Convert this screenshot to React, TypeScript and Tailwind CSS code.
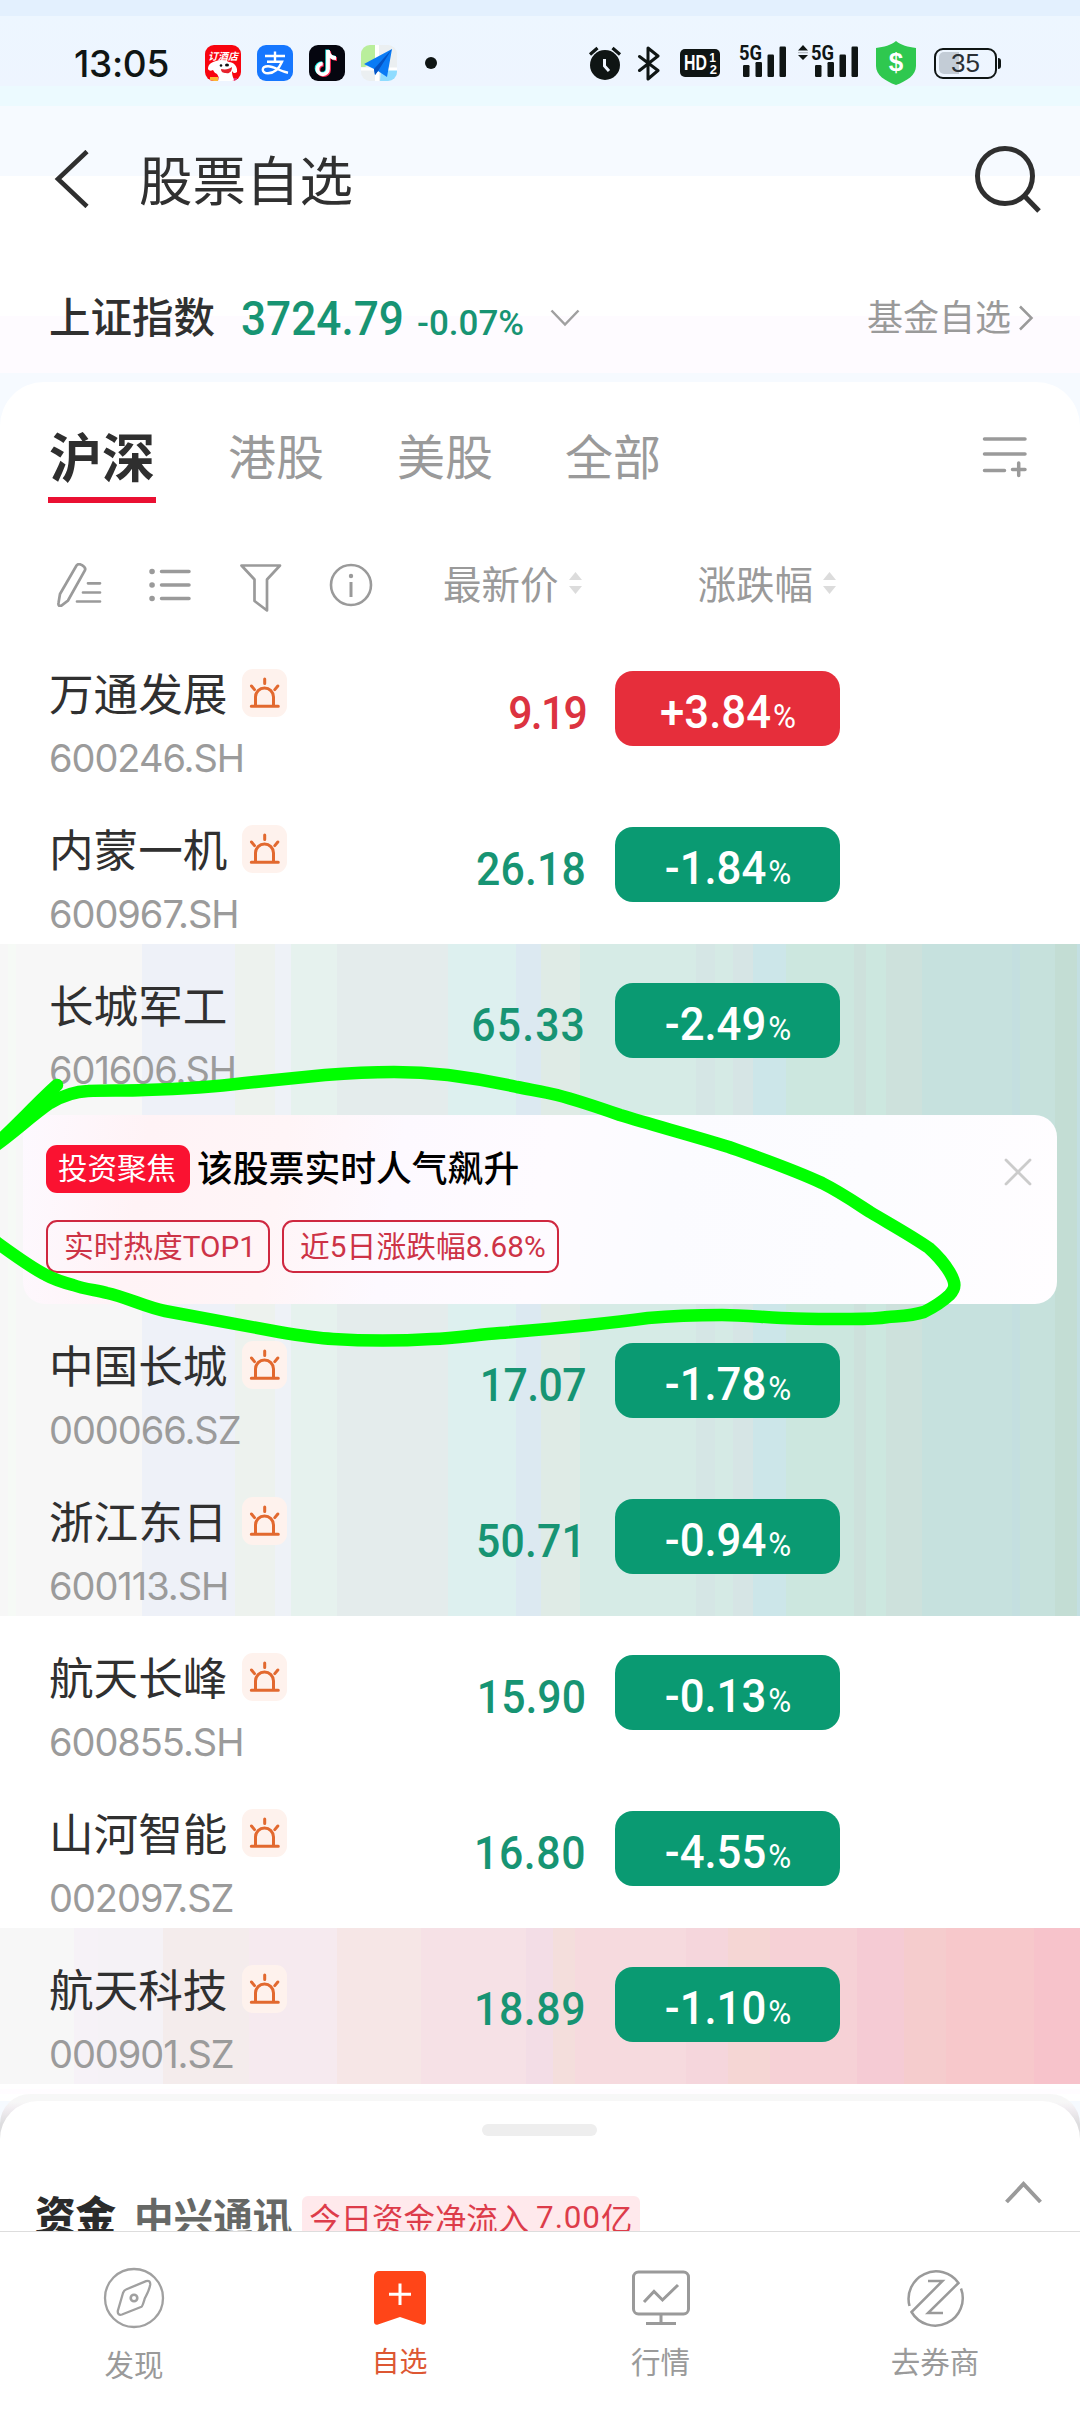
import React from "react";

const CJK = "font-['Noto_Sans_CJK_SC',sans-serif]";
const DIN = "font-['Roboto','Noto_Sans_CJK_SC',sans-serif]";

type Stock = { name: string; code: string; price: string; change: string; tracking: string; alert?: boolean };

const plainTop: Stock[] = [
  { name: "万通发展", code: "600246.SH", price: "9.19", change: "+3.84", tracking: "tracking-[-1.9px]", alert: true },
  { name: "内蒙一机", code: "600967.SH", price: "26.18", change: "-1.84", tracking: "tracking-[0.2px]", alert: true },
];
const focus: Stock = { name: "长城军工", code: "601606.SH", price: "65.33", change: "-2.49", tracking: "tracking-[1.2px]" };
const greenRows: Stock[] = [
  { name: "中国长城", code: "000066.SZ", price: "17.07", change: "-1.78", tracking: "tracking-[-0.6px]", alert: true },
  { name: "浙江东日", code: "600113.SH", price: "50.71", change: "-0.94", tracking: "tracking-[0.2px]", alert: true },
];
const plainBottom: Stock[] = [
  { name: "航天长峰", code: "600855.SH", price: "15.90", change: "-0.13", tracking: "tracking-[0px]", alert: true },
  { name: "山河智能", code: "002097.SZ", price: "16.80", change: "-4.55", tracking: "tracking-[0.6px]", alert: true },
];
const pinkRow: Stock = { name: "航天科技", code: "000901.SZ", price: "18.89", change: "-1.10", tracking: "tracking-[0.6px]", alert: true };

function AlertBadge() {
  return (
    <div className="ml-[15px] flex h-[48px] w-[45px] items-center justify-center rounded-[11px] bg-[#fef2ed]">
      <svg width="45" height="48" viewBox="0 0 45 48" fill="none" stroke="#e2692f" strokeWidth="3" strokeLinecap="round">
        <path d="M13.5 37V28a9 9 0 0 1 18 0v9M9.3 37.2h27M22.7 10v4.5M9.5 17l3 3.6M35.8 17l-3 3.6" />
      </svg>
    </div>
  );
}

function StockRow({ s }: { s: Stock }) {
  const up = s.change.startsWith("+");
  return (
    <div className="flex h-[156px] items-start">
      <div className="w-[360px] pl-[49px] pt-[37px]">
        <div className="flex h-[48px] items-center">
          <span className={`${CJK} -mt-[2px] whitespace-nowrap text-[44.6px] leading-none text-[#303030]`}>{s.name}</span>
          {s.alert && <AlertBadge />}
        </div>
        <div className="mt-[21px] whitespace-nowrap font-[Inter,sans-serif] text-[38px] leading-[40px] tracking-[-1.05px] text-[#9b9b9b]">
          {s.code}
        </div>
      </div>
      <div className={`${DIN} ${s.tracking} mt-[57px] w-[226px] origin-right scale-x-[.93] text-right text-[46px] font-medium leading-[48px] ${up ? "text-[#dc3340]" : "text-[#179473]"}`}>
        {s.price}
      </div>
      <div className={`ml-[29px] mt-[39px] h-[75px] w-[225px] rounded-[18px] pt-[17px] ${up ? "bg-[#e62e3b]" : "bg-[#0a9a72]"}`}>
        <div className={`${DIN} flex scale-x-[.95] items-baseline justify-center font-medium text-white`}>
          <span className="text-[46px] leading-[48px]">{s.change}</span>
          <span className="ml-[2px] text-[33px] font-normal leading-[48px] tracking-[-1px]">%</span>
        </div>
      </div>
    </div>
  );
}

function SignalBars() {
  return (
    <svg width="46" height="32" viewBox="0 0 46 32" fill="#0f1514" className="overflow-visible">
      <text x="-1" y="15" fontSize="20.5" fontWeight="700" textLength="23" lengthAdjust="spacingAndGlyphs" className="font-[Roboto,sans-serif]">5G</text>
      <rect x="3" y="20" width="6.5" height="12" rx="1.2" />
      <rect x="15.5" y="17" width="6.5" height="15" rx="1.2" />
      <rect x="27.5" y="9.5" width="6.5" height="22.5" rx="1.2" />
      <rect x="39.5" y="1.5" width="6.5" height="30.5" rx="1.2" />
    </svg>
  );
}

function StatusBar() {
  return (
    <div className="flex h-[126px] items-center">
      <div className="w-[205px] whitespace-nowrap pl-[74px] font-[Inter,sans-serif] text-[37px] font-medium leading-none tracking-[-0.3px] text-[#0f1514]">13:05</div>
      <div className="flex w-[192px] justify-between">
        <div className="relative h-9 w-9 overflow-hidden rounded-[9px] bg-[#f8040f]">
          <span className={`${CJK} absolute left-[3px] top-[5px] whitespace-nowrap text-[10px] font-bold italic leading-[12px] text-white`}>订酒店</span>
          <svg width="36" height="36" viewBox="0 0 36 36" className="absolute left-0 top-0">
            <path d="M5 33h27v3H5z" fill="#e22a78" />
            <path d="M3 24c0-5 4-7 8-8 4-2 10-1 13 1 4 0 9 4 8 10-2 2-4 1-5-1 0 6 2 7 2 10H13c1-3 1-4-1-7-2-1-3-2-4-4-2 1-4 1-5-1Z" fill="#fff" />
            <path d="M16 24c5 1 8 0 11-2 0 5-3 7-6 6-3 0-5-1-5-4Z" fill="#e6232d" />
            <circle cx="16" cy="20.5" r="1.3" fill="#111" /><ellipse cx="22" cy="20" rx="2" ry="1.5" fill="#111" />
            <path d="M5 32h8v4H5z" fill="#fdb733" />
          </svg>
        </div>
        <div className="flex h-9 w-9 items-center justify-center rounded-[9px] bg-[#1677ff]">
          <svg width="36" height="36" viewBox="0 0 36 36" fill="none" stroke="#fff" strokeWidth="2.4">
            <path d="M8 11h20M18 6.500v10M10 16.800h15c-3 7-8 11.500-14 11.500-7 0-7-7 0-7 6 0 12 5 20 6.500" />
          </svg>
        </div>
        <div className="flex h-9 w-9 items-center justify-center rounded-[9px] bg-[#05060f]">
          <svg width="36" height="36" viewBox="0 0 36 36" fill="none" strokeWidth="3.8">
            <path d="M19 5v19a5.300 5.300 0 1 1-5.300-5.300M19 6c.5 4 3.500 7 8 7.200" stroke="#25f4ee" transform="translate(-.8 -.6)" />
            <path d="M19 5v19a5.300 5.300 0 1 1-5.300-5.300M19 6c.5 4 3.500 7 8 7.200" stroke="#fe2c55" transform="translate(1 .9)" />
            <path d="M19 5v19a5.300 5.300 0 1 1-5.300-5.300M19 6c.5 4 3.500 7 8 7.200" stroke="#fff" />
          </svg>
        </div>
        <div className="h-9 w-9 overflow-hidden rounded-[9px] bg-[#ebeff1]">
          <svg width="36" height="36" viewBox="0 0 36 36">
            <path d="M0 0h14v14L4 22H0z" fill="#b9ee9b" />
            <path d="M20 25h16v11H19z" fill="#8fdcff" />
            <path d="M14 0h4v36h-4zM0 22.500h36v3H0z" fill="#fff" />
            <path d="M31 4 3 19l10 5 1 6 3-4 9 6z" fill="#0a7bf5" />
            <path d="M31 4 13 24l1 6 3-4z" fill="#0453c4" />
          </svg>
        </div>
      </div>
      <div className="ml-[28px] h-3 w-3 rounded-full bg-[#0f1514]" />
      <svg width="34" height="36" viewBox="0 0 34 36" className="ml-[151px]">
        <circle cx="17" cy="20" r="15" fill="#0f1514" />
        <path d="M2 9.500 9.500 3M32 9.500 24.500 3" stroke="#0f1514" strokeWidth="3.200" fill="none" />
        <path d="M16.500 14v7l4.500 5" stroke="#f0f6ff" strokeWidth="3" fill="none" />
      </svg>
      <svg width="24" height="36" viewBox="0 0 24 36" className="ml-[15px]" fill="none" stroke="#0f1514" strokeWidth="3" strokeLinejoin="round" strokeLinecap="round">
        <path d="M2.500 11.500 21 25.500l-10 8.500V3l10 8L2.500 25.500" />
      </svg>
      <div className="relative ml-[19px] h-7 w-10 rounded-[5px] bg-[#0f1514] font-['Liberation_Sans',sans-serif] font-bold text-white">
        <span className="absolute left-[4px] top-[3px] origin-left scale-x-[.72] text-[22px] leading-[22px]">HD</span>
        <span className="absolute right-[4px] top-[3px] text-[12px] leading-[12px]">1</span>
        <span className="absolute right-[3px] top-[14px] text-[13px] leading-[13px]">2</span>
      </div>
      <div className="ml-[20px] -mt-1 h-8"><SignalBars /></div>
      <svg width="12" height="16" viewBox="0 0 12 16" className="-mt-[20px] ml-[11px]" fill="#0f1514">
        <path d="M6 0l5 5.500H1zM6 15l5-5H1z" /><path d="M1 7.200h10v1H1z" opacity=".3" />
      </svg>
      <div className="-mt-1 ml-[3px] h-8"><SignalBars /></div>
      <div className="relative ml-[18px] h-[44px] w-10">
        <svg width="40" height="44" viewBox="0 0 40 44"><path d="M20 0c5 4 12 6 20 7v18c0 9-9 15-20 19C9 40 0 34 0 25V7c8-1 15-3 20-7Z" fill="#2fc84f" /></svg>
        <span className="absolute inset-0 text-center font-['Liberation_Sans',sans-serif] text-[26px] font-bold leading-[43px] text-white">$</span>
      </div>
      <div className="relative ml-[18px] h-[31px] w-[63px] rounded-[9px] border-[2.500px] border-[#0f1514]">
        <div className="absolute left-[3px] top-[2px] h-[22px] w-[20px] rounded-l-[5px] bg-[#c3ccd6]" />
        <span className="absolute inset-0 text-center font-['Liberation_Sans',sans-serif] text-[26px] leading-[27px] text-[#2a3036]">35</span>
      </div>
      <div className="ml-[1px] h-[11px] w-[3px] rounded-r bg-[#0f1514]" />
    </div>
  );
}

function SortArrows() {
  return (
    <svg width="13" height="24" viewBox="0 0 13 24" fill="#dcdcdc">
      <path d="M6.500 1 13 9H0zM6.500 23 13 15H0z" />
    </svg>
  );
}

function Toolbar() {
  return (
    <div className={`${CJK} flex h-[100px] items-center pl-[57px] pt-[6px] text-[38.500px] leading-none text-[#9a9a9a]`}>
      <svg width="45" height="44" viewBox="0 0 45 44" fill="none" stroke="#9a9a9a" strokeWidth="2.700" strokeLinecap="round">
        <path d="M19.500 2.500c1.500-2 3.500-1.500 5.500-.3s4 2.800 3 5L11 37.500 4.500 42.500c-2 1-3.500 0-3-2.500L3 31ZM31 20.300h12M26 29.500h17M20 38.500h23" />
      </svg>
      <svg width="42" height="36" viewBox="0 0 42 36" className="ml-[47px]" fill="none" stroke="#9a9a9a" strokeLinecap="round">
        <path d="M3 4.500h.1M3 18h.1M3 31.500h.1" strokeWidth="5.500" /><path d="M12.500 4.500H40M12.500 18H40M12.500 31.500H40" strokeWidth="3.500" />
      </svg>
      <svg width="42" height="50" viewBox="0 0 42 50" className="ml-[49px] mt-[6px]" fill="none" stroke="#9a9a9a" strokeWidth="2.700" strokeLinejoin="round">
        <path d="M1.500 2.500h38.500L27 16.500v31L14.500 38V16.500Z" />
      </svg>
      <svg width="44" height="44" viewBox="0 0 44 44" className="ml-[47px]" fill="none" stroke="#9a9a9a" strokeWidth="2.600">
        <circle cx="22" cy="22" r="20" /><path d="M22 19v15" strokeWidth="3" /><circle cx="22" cy="13" r="2.200" fill="#9a9a9a" stroke="none" />
      </svg>
      <span className="-mt-[6px] ml-[70px]">最新价</span>
      <div className="-mt-1 ml-[10px]"><SortArrows /></div>
      <span className="-mt-[6px] ml-[116px]">涨跌幅</span>
      <div className="-mt-1 ml-[10px]"><SortArrows /></div>
    </div>
  );
}

function FocusBanner() {
  return (
    <div className={`${CJK} ml-[23px] mt-[15px] flex h-[189px] w-[1034px] rounded-[22px] bg-[linear-gradient(100deg,#fdf9ff_0%,#fff3f6_12%,#fff5f7_25%,#fdf9ff_36%,#fefbff_50%,#fbfbff_62%,#fcfcff_80%,#fffdff_100%)] pl-[23px] pt-[30px]`}>
      <div className="w-[936px]">
        <div className="flex h-12 items-center">
          <div className="flex h-12 w-[144px] items-center justify-center rounded-[11px] bg-[#fa1231] text-[29.500px] leading-none text-white">
            <span className="-ml-[2px] -mt-[4px]">投资聚焦</span>
          </div>
          <span className="-mt-[4px] ml-[7px] text-[35.800px] font-medium leading-none text-black">该股票实时人气飙升</span>
        </div>
        <div className="mt-[27px] flex gap-3 text-[29.700px] leading-none text-[#cd3346]">
          <div className="flex h-[53px] w-[224px] items-center whitespace-nowrap rounded-[11px] border-[2.500px] border-[#cf2840] pl-[16px]">
            <span className="-mt-[2px]">实时热度<span className={DIN}>TOP1</span></span>
          </div>
          <div className="flex h-[53px] w-[277px] items-center whitespace-nowrap rounded-[11px] border-[2.500px] border-[#cf2840] pl-[16px]">
            <span className="-mt-[2px] tracking-[0.1px]">近<span className={DIN}>5</span>日涨跌幅<span className={DIN}>8.68%</span></span>
          </div>
        </div>
      </div>
      <svg width="28" height="28" viewBox="0 0 28 28" className="mt-[13px] ml-[22px]" stroke="#cbcbcb" strokeWidth="2.800" strokeLinecap="round"><path d="M2 2l24 24M26 2 2 26" /></svg>
    </div>
  );
}

function NavItem({ label, width, active, low, children }: { label: string; width: string; active?: boolean; low?: boolean; children: React.ReactNode }) {
  return (
    <div className={`flex flex-col items-center pt-[34px] ${width}`}>
      <div className="flex h-[62px] items-center">{children}</div>
      <span className={`${CJK} whitespace-nowrap leading-none ${low ? "mt-[21px]" : "mt-[18px]"} ${active ? "text-[28px] text-[#dd5733]" : "text-[29.500px] text-[#9a9a9a]"}`}>{label}</span>
    </div>
  );
}

export default function App() {
  return (
    <div className="relative h-[2412px] w-[1080px] overflow-hidden bg-[#f6faff]">
      <header className="h-[382px] bg-[linear-gradient(180deg,#e3f0fe_0_16px,#edf6ff_16px,#eef5ff_86px,#ecfaff_86px_106px,#f6faff_106px_176px,#ffffff_176px_316px,#fefbff_316px_373px,#f6faff_373px)]">
        <StatusBar />
        <div className="flex h-[106px] items-center pl-[54px]">
          <svg width="36" height="58" viewBox="0 0 36 58" fill="none" stroke="#2f2f2f" strokeWidth="4.600"><path d="M33 1.500 4 29l29 27.500" /></svg>
          <h1 className={`${CJK} -mt-[2px] ml-[49px] text-[53.500px] font-normal leading-none text-[#303030]`}>股票自选</h1>
          <svg width="68" height="68" viewBox="0 0 68 68" className="ml-auto mr-[39px]" fill="none" stroke="#2f2f2f" strokeWidth="5"><circle cx="32" cy="31" r="27.500" /><path d="m51 50.500 15 15.500" /></svg>
        </div>
        <div className="mt-[22px] flex h-[128px] items-center pl-[49px]">
          <span className={`${CJK} -mt-[5px] text-[41.500px] font-medium leading-none text-[#303030]`}>上证指数</span>
          <div className={`${DIN} ml-[26px] flex items-baseline whitespace-nowrap pt-[2px] font-medium text-[#179473]`}>
            <span className="w-[162px] origin-left scale-x-[.92] text-[48px] leading-none">3724.79</span>
            <span className="ml-[14px] w-[109px] text-[35px] leading-none">-0.07%</span>
          </div>
          <svg width="30" height="18" viewBox="0 0 30 18" className="ml-[24px]" fill="none" stroke="#a0a0a0" strokeWidth="2.500"><path d="m1.500 1.500 13.500 14 13.500-14" /></svg>
          <span className={`${CJK} -mt-[7px] ml-auto text-[36px] leading-none text-[#9a9a9a]`}>基金自选</span>
          <svg width="16" height="26" viewBox="0 0 16 26" className="ml-[7px] mr-[46px]" fill="none" stroke="#9a9a9a" strokeWidth="2.500"><path d="m2 1.500 11.500 11.500L2 24.500" /></svg>
        </div>
      </header>

      <main className="h-[1719px] rounded-t-[44px] bg-white">
        <div className={`${CJK} flex h-[150px] items-center pl-[48px] text-[48px] leading-none text-[#9a9a9a]`}>
          <div className="relative -mt-[4px] pl-[1px] text-[53px] font-bold text-[#2f2f2f]">
            沪深
            <div className="absolute -bottom-[21px] left-0 h-[6px] w-[108px] bg-[#ea1032]" />
          </div>
          <span className="-mt-[7px] ml-[73px]">港股</span>
          <span className="-mt-[7px] ml-[73px]">美股</span>
          <span className="-mt-[7px] ml-[72px]">全部</span>
          <svg width="46" height="44" viewBox="0 0 46 44" className="ml-auto mr-[52px]" fill="none" stroke="#9a9a9a" strokeWidth="3.500" strokeLinecap="round">
            <path d="M2.500 4H43M2.500 19H43M2.500 35.500h20M30.500 34.500H43M36.700 28v12.500" />
          </svg>
        </div>
        <Toolbar />
        {plainTop.map((s) => <StockRow key={s.code} s={s} />)}
        <div className="bg-[linear-gradient(90deg,#f7f7f7_0_8px,#f6faf6_8px_16px,#f7f7f7_16px_142px,#eef1f8_142px_235px,#edf2ee_235px_275px,#eef2f7_275px_291px,#e6f2ee_291px_337px,#e4ecec_337px_448px,#ddf0ef_448px_516px,#dce9f1_516px_541px,#dfebe6_541px_580px,#d6ebe6_580px_696px,#d5e6e5_696px_715px,#d5eae5_715px_733px,#d6e5e5_733px_753px,#cce6e9_753px_786px,#cce7df_786px_854px,#cde1dc_854px_866px,#cce7df_866px_886px,#cde1dc_886px_922px,#c6e1de_922px_1012px,#c4dfe0_1012px_1020px,#c6e1dc_1020px_1055px,#c3ddd4_1055px_1077px,#c3dfe2_1077px)]">
          <StockRow s={focus} />
          <FocusBanner />
          {greenRows.map((s) => <StockRow key={s.code} s={s} />)}
        </div>
        {plainBottom.map((s) => <StockRow key={s.code} s={s} />)}
        <div className="bg-[linear-gradient(90deg,#f7f7f7_0_74px,#f6f2f7_74px_98px,#f5f2f6_98px_163px,#f4ecec_163px_249px,#f6eaef_249px_337px,#f6e6e6_337px_421px,#f6e1e6_421px_526px,#f3dde6_526px_553px,#f4dedc_553px_575px,#f6dade_575px_686px,#f5d6dc_686px_728px,#f5d6d4_728px_770px,#f6d1d6_770px_857px,#f5cbd4_857px_904px,#f5cccd_904px_946px,#f7c8cb_946px_1034px,#f7c3cb_1034px)]">
          <StockRow s={pinkRow} />
        </div>
        <div className="h-[10px] bg-[linear-gradient(180deg,#ffffff_0_5px,#fffcff_5px)]" />
        <div className="h-[50px] rounded-t-[30px] bg-[linear-gradient(180deg,#f7f7f7_0_8px,#f2eef2_14px,#dddddf_30px)]" />
      </main>

      <section className="relative h-[130px] overflow-hidden rounded-t-[38px] bg-white pt-[23px]">
        <div className="ml-[482px] h-3 w-[115px] rounded-full bg-[#eeeeee]" />
        <div className={`${CJK} flex items-start pl-[35px] pt-[60px] leading-none`}>
          <span className="-mt-[2px] text-[40.500px] font-black text-[#2b2b2b]">资金</span>
          <span className="-mt-[1px] ml-[18px] text-[39.600px] font-bold text-[#666866]">中兴通讯</span>
          <div className="ml-[10px] flex h-[46px] w-[338px] items-center whitespace-nowrap rounded-[6px] bg-[#ffe9ec] pb-[2px] pl-[7px] text-[31.400px] text-[#dd3c4a]">
            今日资金净流入&nbsp;<span className={`${DIN} tracking-[0.9px]`}>7.00</span>亿
          </div>
          <svg width="37" height="24" viewBox="0 0 37 24" className="-mt-[16px] ml-auto mr-[38px]" fill="none" stroke="#9a9a9a" strokeWidth="4"><path d="M1.500 22 18.500 4 35.500 22" /></svg>
        </div>
      </section>

      <nav className="relative flex h-[181px] border-t border-[#dddddd] bg-white">
        <NavItem label="发现" width="w-[268px]" low>
          <svg width="62" height="62" viewBox="0 0 62 62" className="mt-[2px]" fill="none" stroke="#a0a0a0" strokeWidth="2.300">
            <circle cx="31" cy="31" r="29" /><circle cx="31" cy="31" r="3.300" strokeWidth="2.600" />
            <path d="M23 22.500 43 14.200c3-1 4.500.5 4.200 3.500-.7 5-3 9-5.500 14-1.200 4-2.200 7.500-3.200 8L19 47.500c-3 1-4.500-.6-4.200-3.500L20 26c.7-2 1.500-3 3-3.500Z" />
          </svg>
        </NavItem>
        <NavItem label="自选" width="w-[263px]" active>
          <svg width="52" height="54" viewBox="0 0 52 54" className="mt-[1px]">
            <path d="M5 0h42a5 5 0 0 1 5 5v46c0 2-2 3.500-4 2.500L26 46 4 53.500c-2 1-4-.5-4-2.500V5a5 5 0 0 1 5-5Z" fill="#ff4518" />
            <path d="M15 23.200h22M26 12.500v21.500" stroke="#fff" strokeWidth="3" />
          </svg>
        </NavItem>
        <NavItem label="行情" width="w-[259px]">
          <svg width="60" height="58" viewBox="0 0 60 58" className="mt-[1px]" fill="none" stroke="#9a9a9a" strokeWidth="3">
            <rect x="2.500" y="3" width="55" height="42" rx="5" /><path d="M30 45v9M15 54.500h30M13 33l10-10.500 8.500 8.500L47 16" />
          </svg>
        </NavItem>
        <NavItem label="去券商" width="w-[290px]">
          <svg width="60" height="60" viewBox="0 0 60 60" fill="none" stroke="#9a9a9a" strokeWidth="2.500">
            <path d="M4.500 39A27.500 27.500 0 0 1 53.500 16L23 46h15M23 14h14.500L6.500 45A27.500 27.500 0 0 0 56 21.500" />
          </svg>
        </NavItem>
      </nav>

      <svg width="1080" height="300" viewBox="0 1060 1080 300" className="pointer-events-none absolute left-0 top-[1060px]" fill="none" stroke="#00ff00" strokeWidth="12.500" strokeLinecap="round" strokeLinejoin="round">
        <path d="M57 1085C40 1100 18 1124-8 1148C10 1136 30 1117 50 1103C62 1096 73 1091.500 88 1091C105 1090 125 1091 145 1090C180 1089 213 1087 245 1083L325 1075C350 1073 370 1072 394 1072C415 1072 430 1073 448 1075C472 1078 495 1082 517 1087C532 1090 545 1092 557 1095C580 1101 600 1108 620 1115C656 1126 694 1136 729 1147C760 1158 792 1169 822 1183C840 1192 853 1201 870 1212C890 1224 912 1236 929 1248C938 1256 944 1263 949.500 1272C956 1283 956 1288 949.500 1295C942 1302 934 1307 924 1312C912 1316 900 1316 888 1317C876 1319 864 1319 851 1319C832 1319 814 1319 796 1318.500C770 1318 746 1315 722 1315C697 1315 670 1316 648 1318C598 1325 550 1329 500 1333C475 1335 455 1338 432 1339C400 1341 365 1341 333 1339C315 1338 297 1335 279 1332L165 1311C145 1307 126 1297 107 1293C95 1290 84 1289 73 1285C62 1282 55 1280 46 1275C30 1267 14 1255 -8 1239" />
      </svg>
    </div>
  );
}
